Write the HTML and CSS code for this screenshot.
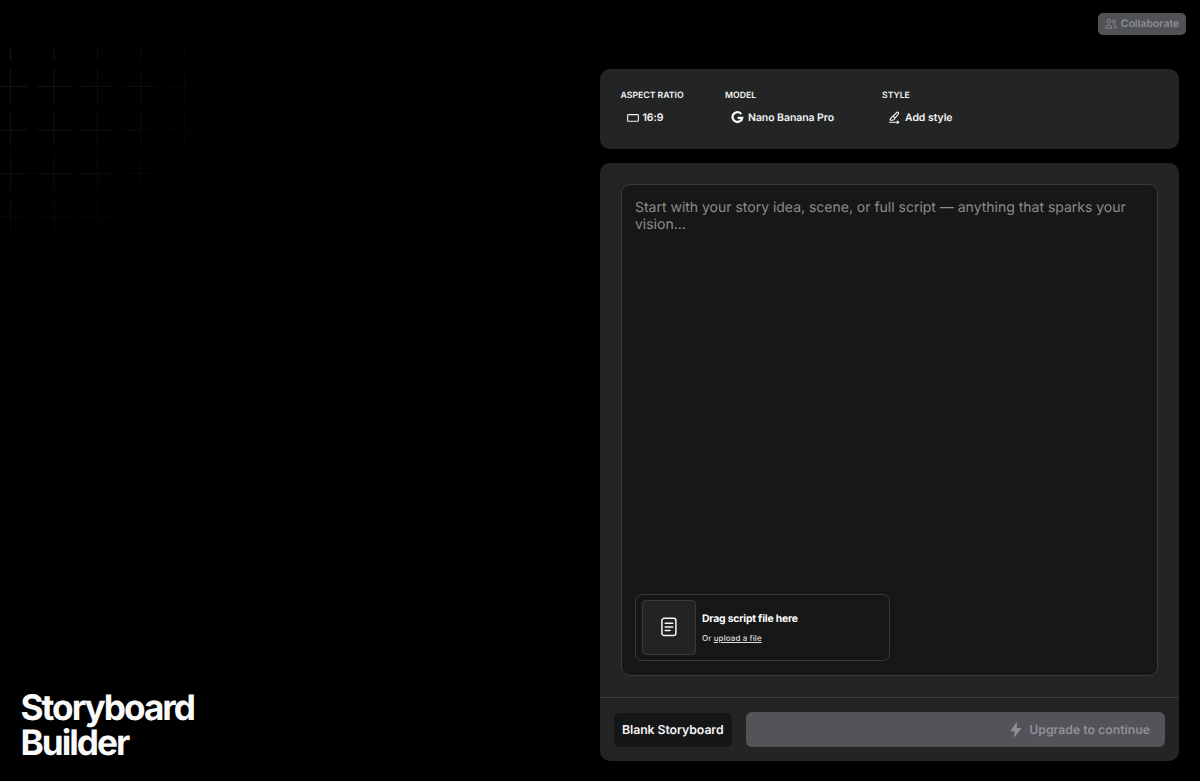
FILE: index.html
```html
<!DOCTYPE html>
<html lang="en">
<head>
    <meta charset="UTF-8">
    <title>Storyboard Builder</title>
    <link rel="stylesheet" href="styles.css">
</head>
<body>
    <div class="page">
        <svg class="grid-bg" width="600" height="500">
            <defs>
                <pattern id="grid" x="10" y="38" width="43.5" height="43.5" patternUnits="userSpaceOnUse">
                    <path d="M.5 0V18M.5 26V43.5M0 .5H18M26 .5H43.5" stroke="#dfe4ff" stroke-width="1" fill="none"/>
                </pattern>
                <radialGradient id="fade" gradientUnits="userSpaceOnUse" cx="0" cy="0" r="360">
                    <stop offset="0" stop-color="#fff" stop-opacity=".1"/>
                    <stop offset=".4" stop-color="#fff" stop-opacity=".055"/>
                    <stop offset=".6" stop-color="#fff" stop-opacity=".018"/>
                    <stop offset="1" stop-color="#fff" stop-opacity="0"/>
                </radialGradient>
                <mask id="gridMask"><rect width="600" height="500" fill="url(#fade)"/></mask>
            </defs>
            <rect width="600" height="500" fill="url(#grid)" mask="url(#gridMask)"/>
        </svg>
        <header class="topbar">
            <button class="collab">
                <svg width="12" height="12" viewBox="0 0 12 12" fill="none" stroke="currentColor" stroke-width="1">
                    <circle cx="3.8" cy="3.3" r="1.9"/>
                    <circle cx="9" cy="3.5" r="1.5"/>
                    <path d="M.7 10.2c0-2.1 1.3-3.2 3.1-3.2s3.1 1.1 3.1 3.2zM8.3 7c1.9-.3 3.2.8 3.2 2.6H8.9"/>
                </svg>
                <span>Collaborate</span>
            </button>
        </header>
        <main class="content">
            <h1 class="title">Storyboard<br>Builder</h1>
            <div class="panels">
                <section class="panel options">
                    <div class="option ratio">
                        <div class="label">ASPECT RATIO</div>
                        <div class="value">
                            <svg width="12" height="12" viewBox="0 0 12 12" fill="none" stroke="currentColor" stroke-width="1.1">
                                <rect x=".6" y="2.6" width="10.8" height="6.6" rx=".8"/>
                            </svg>
                            <span>16:9</span>
                        </div>
                    </div>
                    <div class="option model">
                        <div class="label">MODEL</div>
                        <div class="value">
                            <svg width="13" height="13" viewBox="0 0 13 13" fill="none" stroke="currentColor" stroke-width="2.3">
                                <path d="M10.3 3A4.9 4.9 0 1 0 11.3 6.8H6.6"/>
                            </svg>
                            <span>Nano Banana Pro</span>
                        </div>
                    </div>
                    <div class="option">
                        <div class="label">STYLE</div>
                        <div class="value">
                            <svg width="13" height="13" viewBox="0 0 13 13" fill="none" stroke="currentColor" stroke-width="1.1" stroke-linecap="round" stroke-linejoin="round">
                                <path d="M4.7 5.5l3.9-3.9c.6-.6 1.5-.6 1.8-.2.4.5.3 1.1-.2 1.7L6.8 7.5M4.7 5.5c1.2.2 1.9.9 2.1 2M4.7 5.5C2.7 5.8 3 7.6 2 9c2 .5 4.6.2 4.8-1.5M1.5 11.3h9.3M9.3 10.2l1.5 1.1-1.5 1.1"/>
                            </svg>
                            <span>Add style</span>
                        </div>
                    </div>
                </section>
                <section class="panel editor">
                    <div class="editor-body">
                        <div class="script">
                            <p class="placeholder">Start with your story idea, scene, or full script — anything that sparks your vision...</p>
                            <div class="drop">
                                <div class="drop-icon">
                                    <svg width="18" height="20" viewBox="0 0 18 20" fill="none" stroke="currentColor" stroke-width="1.5" stroke-linecap="round">
                                        <rect x="1.9" y="1.3" width="14" height="17.2" rx="2.3"/>
                                        <path d="M5.2 6.3h7.5M5.2 9.9h7.5M5.2 13.5h4.8"/>
                                    </svg>
                                </div>
                                <div class="drop-text">
                                    <div class="drop-title">Drag script file here</div>
                                    <div class="drop-sub">Or <a class="upload">upload a file</a></div>
                                </div>
                            </div>
                        </div>
                    </div>
                    <footer class="actions">
                        <button class="blank">Blank Storyboard</button>
                        <button class="upgrade">
                            <svg width="14" height="18" viewBox="0 0 14 18" fill="currentColor">
                                <path d="M7.9.8L1.2 10.2h4.4L4.9 16.8 12.6 7H7.9z"/>
                            </svg>
                            <span>Upgrade to continue</span>
                        </button>
                    </footer>
                </section>
            </div>
        </main>
    </div>
</body>
</html>
```

FILE: styles.css
```css
*{
    margin:0;
    padding:0;
    box-sizing:border-box;
}
body{
    height:781px;
    background-color:#000;
    color:#f4f4f5;
    font-family:Inter, sans-serif;
    text-rendering:geometricPrecision;
    overflow:hidden;
}
button{
    border:none;
    font-family:inherit;
    text-rendering:inherit;
}
svg{
    display:block;
    flex:none;
}
.page{
    position:relative;
    height:781px;
    display:flex;
    flex-direction:column;
}
/* faint dashed grid behind the left side */
.grid-bg{
    position:absolute;
    left:0;
    top:48px;
}
.topbar{
    height:69px;
    padding:13px 14px 0 0;
    display:flex;
    justify-content:flex-end;
    align-items:flex-start;
}
.collab{
    width:88px;
    height:21.5px;
    display:flex;
    align-items:center;
    justify-content:center;
    gap:4px;
    border-radius:5px;
    background-color:#515256;
    color:#8b8c92;
    font-size:10.5px;
    font-weight:600;
}
.content{
    flex:1;
    display:flex;
    justify-content:space-between;
    align-items:flex-end;
    padding:0 21px 20px 20.5px;
}
.title{
    position:relative;
    font-size:35.2px;
    line-height:35px;
    font-weight:700;
    letter-spacing:-2px;
    color:#fafafa;
}
.panels{
    width:579.5px;
    height:692px;
    display:flex;
    flex-direction:column;
    gap:14px;
}
.panel{
    border-radius:10px;
    background-color:#232525;
}
.options{
    height:80px;
    padding:20px 20px 0 21px;
    display:flex;
}
.ratio{
    width:104.5px;
}
.model{
    width:157px;
}
.label{
    padding-top:1px;
    font-size:8.7px;
    line-height:12px;
    font-weight:600;
}
.value{
    display:flex;
    align-items:center;
    gap:4px;
    height:16px;
    margin:7.5px 0 0 6px;
    font-size:10.45px;
    font-weight:600;
    letter-spacing:-.04px;
}
.editor{
    flex:1;
    display:flex;
    flex-direction:column;
}
.editor-body{
    flex:1;
    padding:21px;
}
.script{
    height:100%;
    padding:14px 13.5px;
    display:flex;
    flex-direction:column;
    justify-content:space-between;
    border:1px solid #383b3b;
    border-radius:9px;
    background-color:#171717;
}
.placeholder{
    font-size:14px;
    line-height:17.4px;
    letter-spacing:-.01px;
    color:#8b8b8e;
}
.drop{
    width:254.5px;
    height:67.5px;
    padding:5.5px;
    display:flex;
    align-items:center;
    gap:6px;
    border:1px solid #383a3a;
    border-radius:7px;
}
.drop-icon{
    width:54.5px;
    height:55px;
    display:flex;
    align-items:center;
    justify-content:center;
    border:1px solid #383b3b;
    border-radius:4px;
    background-color:#222424;
}
.drop-title{
    font-size:10.4px;
    line-height:16px;
    font-weight:700;
    letter-spacing:-.2px;
    color:#fff;
}
.drop-sub{
    margin-top:5px;
    font-size:8px;
    line-height:12px;
    font-weight:500;
    letter-spacing:.1px;
    color:#dededf;
}
.upload{
    text-decoration:underline;
}
.actions{
    height:64px;
    padding:0 14px;
    display:flex;
    align-items:center;
    gap:14px;
    border-top:1px solid #3a3d3d;
}
.blank{
    width:118.5px;
    height:34px;
    border-radius:5px;
    background-color:#151618;
    color:#f4f4f5;
    font-size:12.3px;
    font-weight:600;
    letter-spacing:-.07px;
}
.upgrade{
    flex:1;
    height:35px;
    padding-right:15px;
    display:flex;
    align-items:center;
    justify-content:flex-end;
    gap:6px;
    border-radius:6px;
    background-color:#535358;
    color:#8f8f98;
    font-size:12.3px;
    font-weight:600;
    letter-spacing:-.02px;
}
```
